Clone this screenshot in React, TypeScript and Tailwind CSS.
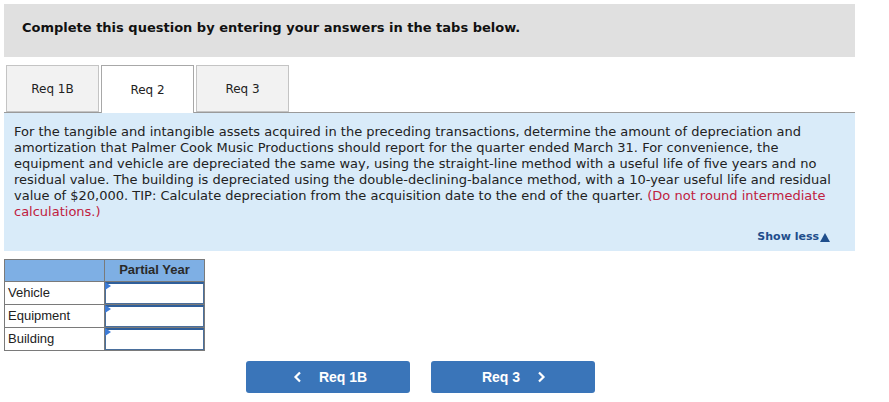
import React from 'react';

const verdana = { fontFamily: '"DejaVu Sans", Verdana, sans-serif' };

// little blue corner marker on the answer inputs
const CellInput: React.FC = () => (
  <div className="relative h-full w-full bg-white border border-[#4a6f9c] border-t-2 border-t-[#2f5f9a]">
    <svg className="absolute -left-px -top-[2px]" width="6" height="8" viewBox="0 0 6 8">
      <path d="M0 0 L6 4 L0 8 Z" fill="#3d7bd6" />
    </svg>
  </div>
);

const Chevron: React.FC<{ dir: 'left' | 'right' }> = ({ dir }) => (
  <svg width="9" height="12" viewBox="0 0 9 12" className="inline-block">
    <path
      d={dir === 'left' ? 'M7 1.5 L2.5 6 L7 10.5' : 'M2 1.5 L6.5 6 L2 10.5'}
      stroke="white"
      strokeWidth="2.2"
      fill="none"
    />
  </svg>
);

export default function App() {
  const tabs = ['Req 1B', 'Req 2', 'Req 3'];
  const rows = ['Vehicle', 'Equipment', 'Building'];

  return (
    <div className="w-[889px] h-[402px] bg-white pt-[4px] pl-[4px]">
      <div className="w-[851px]">
        {/* Instructions */}
        <div className="h-[53px] bg-[#e0e0e0] pl-[18px] pt-[16px]" style={verdana}>
          <p className="text-[13px] font-bold text-[#111] leading-[16px]">
            Complete this question by entering your answers in the tabs below.
          </p>
        </div>

        {/* Tabs */}
        <div className="mt-[8px] flex h-[48px] gap-[2px] pl-[2px] border-b border-[#9a9a9a]" style={verdana}>
          {tabs.map((t) => (
            <div
              key={t}
              className={
                t === 'Req 2'
                  ? 'w-[93px] h-[48px] bg-white border border-b-0 border-[#a8a8a8] flex items-center justify-center text-[12px] text-[#222]'
                  : 'w-[93px] h-[47px] bg-[#f2f2f2] border border-[#c4c4c4] flex items-center justify-center pt-[1px] text-[12px] text-[#222]'
              }
            >
              {t}
            </div>
          ))}
        </div>

        {/* Question text */}
        <div className="h-[138px] bg-[#d9ebf9] pl-[10px] pt-[11px] pr-[25px]" style={verdana}>
          <p className="text-[13px] leading-[16px] text-[#222] whitespace-nowrap">
            For the tangible and intangible assets acquired in the preceding transactions, determine the amount of depreciation and
            <br />
            amortization that Palmer Cook Music Productions should report for the quarter ended March 31. For convenience, the
            <br />
            equipment and vehicle are depreciated the same way, using the straight-line method with a useful life of five years and no
            <br />
            residual value. The building is depreciated using the double-declining-balance method, with a 10-year useful life and residual
            <br />
            value of $20,000. TIP: Calculate depreciation from the acquisition date to the end of the quarter.{' '}
            <span className="text-[#c0213f]">(Do not round intermediate</span>
            <br />
            <span className="text-[#c0213f]">calculations.)</span>
          </p>
          <div className="mt-[9px] flex justify-end">
            <span className="text-[11px] font-bold text-[#1f4e8c] flex items-center gap-[1px]">
              Show less
              <svg width="10" height="9" viewBox="0 0 10 9">
                <path d="M5 0 L10 9 L0 9 Z" fill="#1f4e8c" />
              </svg>
            </span>
          </div>
        </div>

        {/* Answer table */}
        <div
          className="mt-[8px] w-[201px] border border-[#7a7a7a] text-[13px] text-[#222]"
          style={{ fontFamily: '"Liberation Sans", Arial, sans-serif' }}
        >
          <div className="flex h-[22px] bg-[#7eafe4] border-b border-[#7a7a7a]">
            <div className="w-[100px] border-r border-[#7a7a7a]" />
            <div className="flex-1 flex items-center justify-center pb-[2px] font-bold text-[#2a2a2a]">Partial Year</div>
          </div>
          {rows.map((r, i) => (
            <div key={r} className={i < rows.length - 1 ? 'flex h-[23px] border-b border-[#7a7a7a]' : 'flex h-[22px]'}>
              <div className="w-[100px] border-r border-[#7a7a7a] flex items-center pl-[3px]">{r}</div>
              <div className="flex-1">
                <CellInput />
              </div>
            </div>
          ))}
        </div>

        {/* Navigation */}
        <div
          className="mt-[10px] flex gap-[21px] pl-[242px]"
          style={{ fontFamily: '"Liberation Sans", Arial, sans-serif' }}
        >
          <button className="w-[164px] h-[32px] rounded-[3px] bg-[#3a75b9] text-white font-bold text-[14px] flex items-center justify-center gap-[17px] pl-[4px]">
            <Chevron dir="left" />
            <span>Req 1B</span>
          </button>
          <button className="w-[164px] h-[32px] rounded-[3px] bg-[#3a75b9] text-white font-bold text-[14px] flex items-center justify-center gap-[17px] pl-[2px]">
            <span>Req 3</span>
            <Chevron dir="right" />
          </button>
        </div>
      </div>
    </div>
  );
}
